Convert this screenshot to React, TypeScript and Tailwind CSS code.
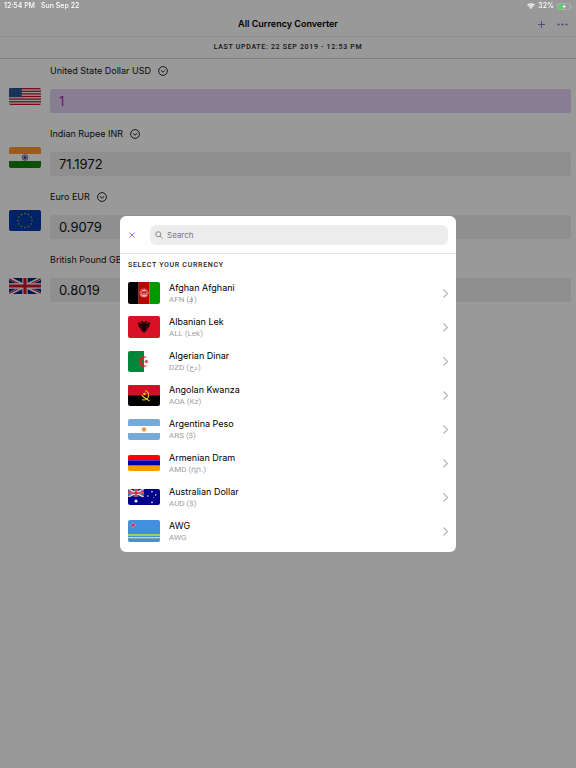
import { useState } from "react";
import type { ReactNode } from "react";

const star = (cx: number, cy: number, r: number, points = 5, inner = 0.45) => {
  const out: string[] = [];
  for (let i = 0; i < points * 2; i++) {
    const rad = i % 2 === 0 ? r : r * inner;
    const a = (Math.PI * i) / points - Math.PI / 2;
    out.push(`${(cx + rad * Math.cos(a)).toFixed(2)},${(cy + rad * Math.sin(a)).toFixed(2)}`);
  }
  return out.join(" ");
};

const UnionJack = () => (
  <svg viewBox="0 0 60 30" width="60" height="30" preserveAspectRatio="none">
    <rect width="60" height="30" fill="#00247d" />
    <path d="M0 0L60 30M60 0L0 30" stroke="#fff" strokeWidth="6" />
    <path d="M0 1.5L28 15.5M60 28.5L32 14.5M60 1L32 15M0 29L28 15" stroke="#cf142b" strokeWidth="2" />
    <path d="M30 0V30M0 15H60" stroke="#fff" strokeWidth="10" />
    <path d="M30 0V30M0 15H60" stroke="#cf142b" strokeWidth="6" />
  </svg>
);

const flags: Record<string, { h: number; art: ReactNode }> = {
  USD: {
    h: 17,
    art: (
      <>
        <rect width="96" height="51" fill="#fff" />
        {[0, 1, 2, 3, 4, 5, 6].map((i) => (
          <rect key={i} y={i * 7.85} width="96" height="3.92" fill="#c8102e" />
        ))}
        <rect width="38" height="27.5" fill="#1f4a8c" />
        {Array.from({ length: 45 }).map((_, i) => (
          <circle key={i} cx={3 + (i % 9) * 4} cy={3 + Math.floor(i / 9) * 5.2} r="0.6" fill="#fff" />
        ))}
      </>
    ),
  },
  INR: {
    h: 21,
    art: (
      <>
        <rect width="96" height="63" fill="#fff" />
        <rect width="96" height="21" fill="#ff9933" />
        <rect y="42" width="96" height="21" fill="#128807" />
        <circle cx="48" cy="31.5" r="8.5" fill="none" stroke="#21217f" strokeWidth="1.6" />
        <circle cx="48" cy="31.5" r="3" fill="#21217f" />
        {Array.from({ length: 12 }).map((_, i) => (
          <path key={i} d="M48 23V40" stroke="#21217f" strokeWidth="0.6" transform={`rotate(${i * 15} 48 31.5)`} />
        ))}
      </>
    ),
  },
  EUR: {
    h: 21,
    art: (
      <>
        <rect width="96" height="63" fill="#003bac" />
        {Array.from({ length: 12 }).map((_, i) => (
          <polygon
            key={i}
            points={star(48 + 21 * Math.sin((i * Math.PI) / 6), 31.5 - 21 * Math.cos((i * Math.PI) / 6), 3)}
            fill="#ffdd00"
          />
        ))}
      </>
    ),
  },
  GBP: {
    h: 16,
    art: (
      <svg width="96" height="48" viewBox="0 0 60 30">
        <UnionJack />
      </svg>
    ),
  },
  AFN: {
    h: 22,
    art: (
      <>
        <rect width="32" height="66" fill="#000" />
        <rect x="32" width="32" height="66" fill="#bf0000" />
        <rect x="64" width="32" height="66" fill="#009900" />
        <circle cx="48" cy="33" r="12" fill="none" stroke="#fff" strokeWidth="2" strokeDasharray="4 1" />
        <path d="M41 40V32a7 7 0 0 1 14 0v8zM44 25h8M40 42h16" fill="none" stroke="#fff" strokeWidth="1.8" />
        <path d="M46 40v-6h4v6M48 28v4" fill="none" stroke="#fff" strokeWidth="1.5" />
      </>
    ),
  },
  ALL: {
    h: 22,
    art: (
      <>
        <rect width="96" height="66" fill="#d81126" />
        <path
          d="M48 22l-2-5-7-3 1 4-3 2 6 2v2l-3-1-10-6 1 4-1 3 2 3-1 3 3 2v3l3 2v3l4-1-2 6 4-1 2 4 1-1 2 6 2-6 1 1 2-4 4 1-2-6 4 1v-3l3-2v-3l3-2-1-3 2-3-1-3 1-4-10 6-3 1v-2l6-2-3-2 1-4-7 3z"
          fill="#180508"
        />
        <path d="M43 27l-2 12M53 27l2 12M36 25l2 12M60 25l-2 12" stroke="#a30f1f" strokeWidth="1" />
      </>
    ),
  },
  DZD: {
    h: 21,
    art: (
      <>
        <rect width="96" height="63" fill="#fff" />
        <rect width="48" height="63" fill="#00883a" />
        <path d="M59 20a16 16 0 1 0 0 23a12.500 12.500 0 1 1 0-23z" fill="#e01e2b" />
        <polygon points={star(55, 31.5, 7)} fill="#e01e2b" transform="rotate(-90 55 31.5)" />
      </>
    ),
  },
  AOA: {
    h: 21,
    art: (
      <>
        <rect width="96" height="63" fill="#000" />
        <rect width="96" height="31.5" fill="#ce1126" />
        <path d="M52 17a14 14 0 1 1-9 27" fill="none" stroke="#f9d616" strokeWidth="3.600" strokeDasharray="3 0.7" />
        <path d="M41 31C48 38 56 42 65 48" fill="none" stroke="#f9d616" strokeWidth="3.200" />
        <polygon points={star(49, 27, 5.500)} fill="#f9d616" />
      </>
    ),
  },
  ARS: {
    h: 21,
    art: (
      <>
        <rect width="96" height="63" fill="#fff" />
        <rect width="96" height="21" fill="#75aadb" />
        <rect y="42" width="96" height="21" fill="#75aadb" />
        <polygon points={star(48, 31.5, 8.500, 16, 0.65)} fill="#f0a840" />
        <circle cx="48" cy="31.5" r="4.500" fill="#d99a4a" />
      </>
    ),
  },
  AMD: {
    h: 16,
    art: (
      <>
        <rect width="96" height="16" fill="#ff0000" />
        <rect y="16" width="96" height="16" fill="#0000aa" />
        <rect y="32" width="96" height="16" fill="#ff9900" />
      </>
    ),
  },
  AUD: {
    h: 16,
    art: (
      <>
        <rect width="96" height="48" fill="#00008b" />
        <svg width="48" height="24" viewBox="0 0 60 30">
          <UnionJack />
        </svg>
        <polygon points={star(24, 36, 6.500, 7)} fill="#fff" />
        <polygon points={star(72, 40, 3.500, 7)} fill="#fff" />
        <polygon points={star(60, 21, 3.200, 7)} fill="#fff" />
        <polygon points={star(72, 8, 3.200, 7)} fill="#fff" />
        <polygon points={star(83, 18, 3.200, 7)} fill="#fff" />
        <polygon points={star(77, 26, 2)} fill="#fff" />
      </>
    ),
  },
  AWG: {
    h: 22,
    art: (
      <>
        <rect width="96" height="66" fill="#418fde" />
        <rect y="43" width="96" height="4" fill="#e9dc3c" />
        <rect y="51" width="96" height="4" fill="#e9dc3c" />
        <polygon points={star(15, 15, 9.500, 4, 0.35)} fill="#fff" />
        <polygon points={star(15, 15, 8.500, 4, 0.38)} fill="#e0102b" />
      </>
    ),
  },
};

const Flag = ({ code }: { code: string }) => (
  <svg
    viewBox={`0 0 96 ${flags[code].h * 3}`}
    width="32"
    height={flags[code].h}
    className="shrink-0 rounded-xs"
    aria-hidden="true"
  >
    {flags[code].art}
  </svg>
);

const amounts = [
  { code: "USD", name: "United State Dollar", value: "1", active: true },
  { code: "INR", name: "Indian Rupee", value: "71.1972" },
  { code: "EUR", name: "Euro", value: "0.9079" },
  { code: "GBP", name: "British Pound", value: "0.8019" },
];

const currencies = [
  { code: "AFN", name: "Afghan Afghani", detail: "AFN (؋)" },
  { code: "ALL", name: "Albanian Lek", detail: "ALL (Lek)" },
  { code: "DZD", name: "Algerian Dinar", detail: "DZD (دج)" },
  { code: "AOA", name: "Angolan Kwanza", detail: "AOA (Kz)" },
  { code: "ARS", name: "Argentina Peso", detail: "ARS ($)" },
  { code: "AMD", name: "Armenian Dram", detail: "AMD (դր.)" },
  { code: "AUD", name: "Australian Dollar", detail: "AUD ($)" },
  { code: "AWG", name: "AWG", detail: "AWG" },
];

const StatusBar = () => (
  <div className="fixed inset-x-0 top-0 z-20 flex h-3 items-center justify-between px-1 text-[7px] font-medium text-white">
    <div className="flex gap-1.5">
      <span>12:54 PM</span>
      <span>Sun Sep 22</span>
    </div>
    <div className="flex items-center gap-[3px]">
      <svg width="8" height="6" viewBox="0 0 16 12" fill="none" stroke="#fff" strokeWidth="2.400">
        <path d="M1 4.500a10 10 0 0 1 14 0M3.800 7.500a6 6 0 0 1 8.400 0" />
        <path d="M8 12L5.500 9.300a3.600 3.600 0 0 1 5 0z" fill="#fff" stroke="none" />
      </svg>
      <span>32%</span>
      <svg width="15" height="7" viewBox="0 0 45 21">
        <rect x="1" y="1" width="38" height="19" rx="5" fill="none" stroke="#c4c4c4" strokeWidth="1.500" />
        <rect x="3" y="3" width="13" height="15" rx="2" fill="#4cd964" />
        <path d="M23 3l-7 9h5l-2 7 8-10h-5z" fill="#fff" />
        <path d="M41 7c3 1 3 6 0 7z" fill="#c4c4c4" />
      </svg>
    </div>
  </div>
);

const CurrencyPicker = () => {
  const [search, setSearch] = useState("");

  const filtered = currencies.filter((c) =>
    `${c.name} ${c.detail}`.toLowerCase().includes(search.toLowerCase())
  );

  return (
    <div className="fixed inset-0 z-10 flex items-center justify-center bg-black/40">
      <div role="dialog" aria-label="Select your currency" className="h-[336px] w-[336px] overflow-hidden rounded-md bg-white">
        <div className="flex h-[38px] items-center border-b border-[#e4e4e4] px-2">
          <button type="button" aria-label="Close" className="flex h-5 w-2 items-center justify-center">
            <svg width="6" height="6" viewBox="0 0 6 6" stroke="#8a63d2" strokeWidth="0.9">
              <path d="M0.500 0.500L5.500 5.500M5.500 0.500L0.500 5.500" />
            </svg>
          </button>
          <label className="ml-3.5 flex h-5 flex-1 items-center gap-1 rounded-md bg-[#ededee] px-[5px]">
            <svg width="8" height="8" viewBox="0 0 16 16" fill="none" stroke="#77777b" strokeWidth="1.700">
              <circle cx="6.500" cy="6.500" r="5" />
              <path d="M10.200 10.200L15 15" />
            </svg>
            <input
              type="text"
              aria-label="Search"
              placeholder="Search"
              value={search}
              onChange={(e) => setSearch(e.target.value)}
              className="min-w-0 flex-1 bg-transparent text-[8px] outline-none placeholder:text-[#77777b]"
            />
          </label>
        </div>
        <h2 className="flex h-[22px] items-center px-2 font-['Roboto',sans-serif] text-[7px] font-medium tracking-widest text-[#222]">
          SELECT YOUR CURRENCY
        </h2>
        <ul>
          {filtered.map((c) => (
            <li key={c.code}>
              <button type="button" className="flex h-[34px] w-full items-center gap-[9px] px-2 text-left">
                <Flag code={c.code} />
                <span className="flex-1 pt-0.5">
                  <span className="block text-[9px] leading-3 text-black">{c.name}</span>
                  <span className="block font-['Roboto','Noto_Sans',sans-serif] text-[8px] leading-3 text-[#a0a0a0]">
                    {c.detail}
                  </span>
                </span>
                <svg width="5" height="9" viewBox="0 0 5 9" fill="none" stroke="#b4b4b8" strokeWidth="1.200">
                  <path d="M0.500 0.500L4.500 4.500L0.500 8.500" />
                </svg>
              </button>
            </li>
          ))}
        </ul>
      </div>
    </div>
  );
};

const App = () => {
  const [values, setValues] = useState(amounts.map((a) => a.value));

  return (
    <div className="min-h-screen bg-white font-['Inter','Noto_Sans',sans-serif] text-black">
      <StatusBar />

      <header className="flex h-[37px] items-center border-b border-[#ebebeb] px-2 pt-3">
        <div className="flex-1" />
        <h1 className="text-[9px] font-semibold">All Currency Converter</h1>
        <div className="flex flex-1 items-center justify-end gap-3 text-[#8a6cc8]">
          <button type="button" aria-label="Add currency">
            <svg width="7" height="7" viewBox="0 0 7 7" stroke="currentColor" strokeWidth="0.9">
              <path d="M3.500 0V7M0 3.500H7" />
            </svg>
          </button>
          <button type="button" aria-label="More">
            <svg width="11" height="3" viewBox="0 0 11 3" fill="currentColor">
              <circle cx="1.500" cy="1.500" r="1.100" />
              <circle cx="5.500" cy="1.500" r="1.100" />
              <circle cx="9.500" cy="1.500" r="1.100" />
            </svg>
          </button>
        </div>
      </header>

      <p className="flex h-[22px] items-center justify-center border-b border-[#d2d2d2] font-['Roboto',sans-serif] text-[7px] font-medium tracking-widest text-[#222]">
        LAST UPDATE: 22 SEP 2019 - 12:53 PM
      </p>

      <main>
        {amounts.map((a, i) => (
          <div key={a.code} className="flex h-[63px] items-end gap-[9px] pr-[5px] pb-[9px] pl-[9px]">
            <div className="pb-2">
              <Flag code={a.code} />
            </div>
            <div className="min-w-0 flex-1">
              <div className="mb-3 flex items-center gap-[7px]">
                <label htmlFor={a.code} className="text-[9px] leading-3 text-[#111]">
                  {a.name} {a.code}
                </label>
                <button type="button" aria-label={`Change ${a.name}`}>
                  <svg width="10" height="10" viewBox="0 0 20 20" fill="none" stroke="#111" strokeWidth="1.800">
                    <circle cx="10" cy="10" r="8.800" />
                    <path d="M5.800 8.500L10 12.500L14.200 8.500" />
                  </svg>
                </button>
              </div>
              <input
                id={a.code}
                type="text"
                inputMode="decimal"
                value={values[i]}
                onChange={(e) => setValues(values.map((v, n) => (n === i ? e.target.value : v)))}
                className={
                  a.active
                    ? "block h-6 w-full rounded-xs bg-[#e2d4f2] px-[9px] text-[13px] text-[#9c27b0] outline-none"
                    : "block h-6 w-full rounded-xs bg-[#eeeeee] px-[9px] text-[13px] text-[#111] outline-none"
                }
              />
            </div>
          </div>
        ))}
      </main>

      <CurrencyPicker />
    </div>
  );
};

export default App;
